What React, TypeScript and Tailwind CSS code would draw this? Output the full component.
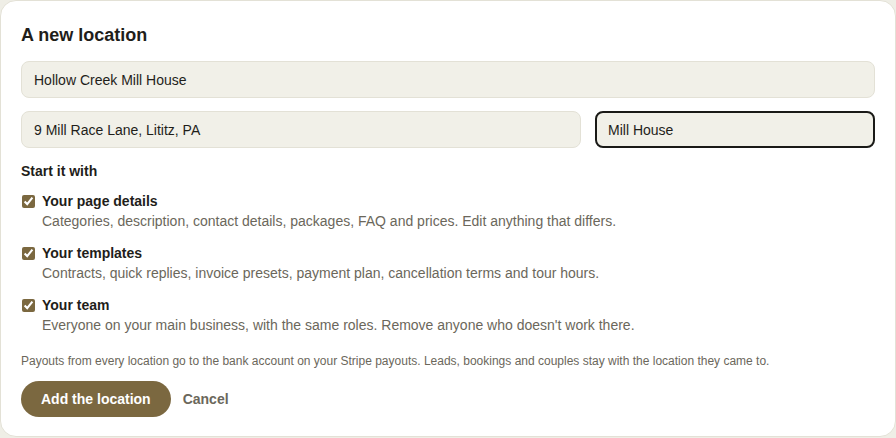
import { useState } from 'react';

const OPTIONS = [
    { key: 'page', title: 'Your page details', desc: 'Categories, description, contact details, packages, FAQ and prices. Edit anything that differs.' },
    { key: 'templates', title: 'Your templates', desc: 'Contracts, quick replies, invoice presets, payment plan, cancellation terms and tour hours.' },
    { key: 'team', title: 'Your team', desc: "Everyone on your main business, with the same roles. Remove anyone who doesn't work there." },
];

export default function App() {
    const [name, setName] = useState('Hollow Creek Mill House');
    const [address, setAddress] = useState('9 Mill Race Lane, Lititz, PA');
    const [short, setShort] = useState('Mill House');
    const [checked, setChecked] = useState<Record<string, boolean>>({ page: true, templates: true, team: true });

    return (
        <div className="min-h-screen bg-[#efeee6] font-['Liberation_Sans',Arial,sans-serif] text-[#1f1e1a]">
            <div className="h-[437px] w-full rounded-2xl border border-[#e3e1d6] bg-white px-5 pt-[22px]">
                <h1 className="text-lg font-bold leading-6">A new location</h1>

                <input
                    value={name}
                    onChange={(e) => setName(e.target.value)}
                    className="mt-[14px] block h-[37px] w-full rounded-lg border border-[#e3e1d6] bg-[#f1f0e8] px-3 text-sm outline-none"
                />

                <div className="mt-[13px] flex gap-[14px]">
                    <input
                        value={address}
                        onChange={(e) => setAddress(e.target.value)}
                        className="block h-[37px] min-w-0 flex-1 rounded-lg border border-[#e3e1d6] bg-[#f1f0e8] px-3 text-sm outline-none"
                    />
                    <input
                        value={short}
                        onChange={(e) => setShort(e.target.value)}
                        className="block h-[37px] w-[280px] rounded-lg border-2 border-[#1a1a17] bg-[#f1f0e8] px-[11px] text-sm outline-none"
                    />
                </div>

                <div className="mt-[13px] text-sm font-bold leading-5">Start it with</div>

                <div className="mt-[10px] flex flex-col gap-[12px]">
                    {OPTIONS.map((o) => (
                        <label key={o.key} className="flex cursor-pointer items-start">
                            <input
                                type="checkbox"
                                checked={checked[o.key]}
                                onChange={() => setChecked({ ...checked, [o.key]: !checked[o.key] })}
                                className="mt-[4px] ml-[1px] h-[13px] w-[13px] shrink-0 accent-[#7b6840]"
                            />
                            <div className="pl-[7px]">
                                <div className="text-sm font-bold leading-5">{o.title}</div>
                                <div className="text-sm leading-5 text-[#6b675b]">{o.desc}</div>
                            </div>
                        </label>
                    ))}
                </div>

                <p className="mt-[18px] text-xs leading-4 text-[#6b675b]">
                    Payouts from every location go to the bank account on your Stripe payouts. Leads, bookings and couples stay with the location they came to.
                </p>

                <div className="mt-[12px] flex items-center gap-3">
                    <button className="h-9 rounded-full bg-[#7b6840] px-5 text-sm font-bold text-white">Add the location</button>
                    <button className="px-0 text-sm font-bold text-[#6b675b]">Cancel</button>
                </div>
            </div>
        </div>
    );
}
